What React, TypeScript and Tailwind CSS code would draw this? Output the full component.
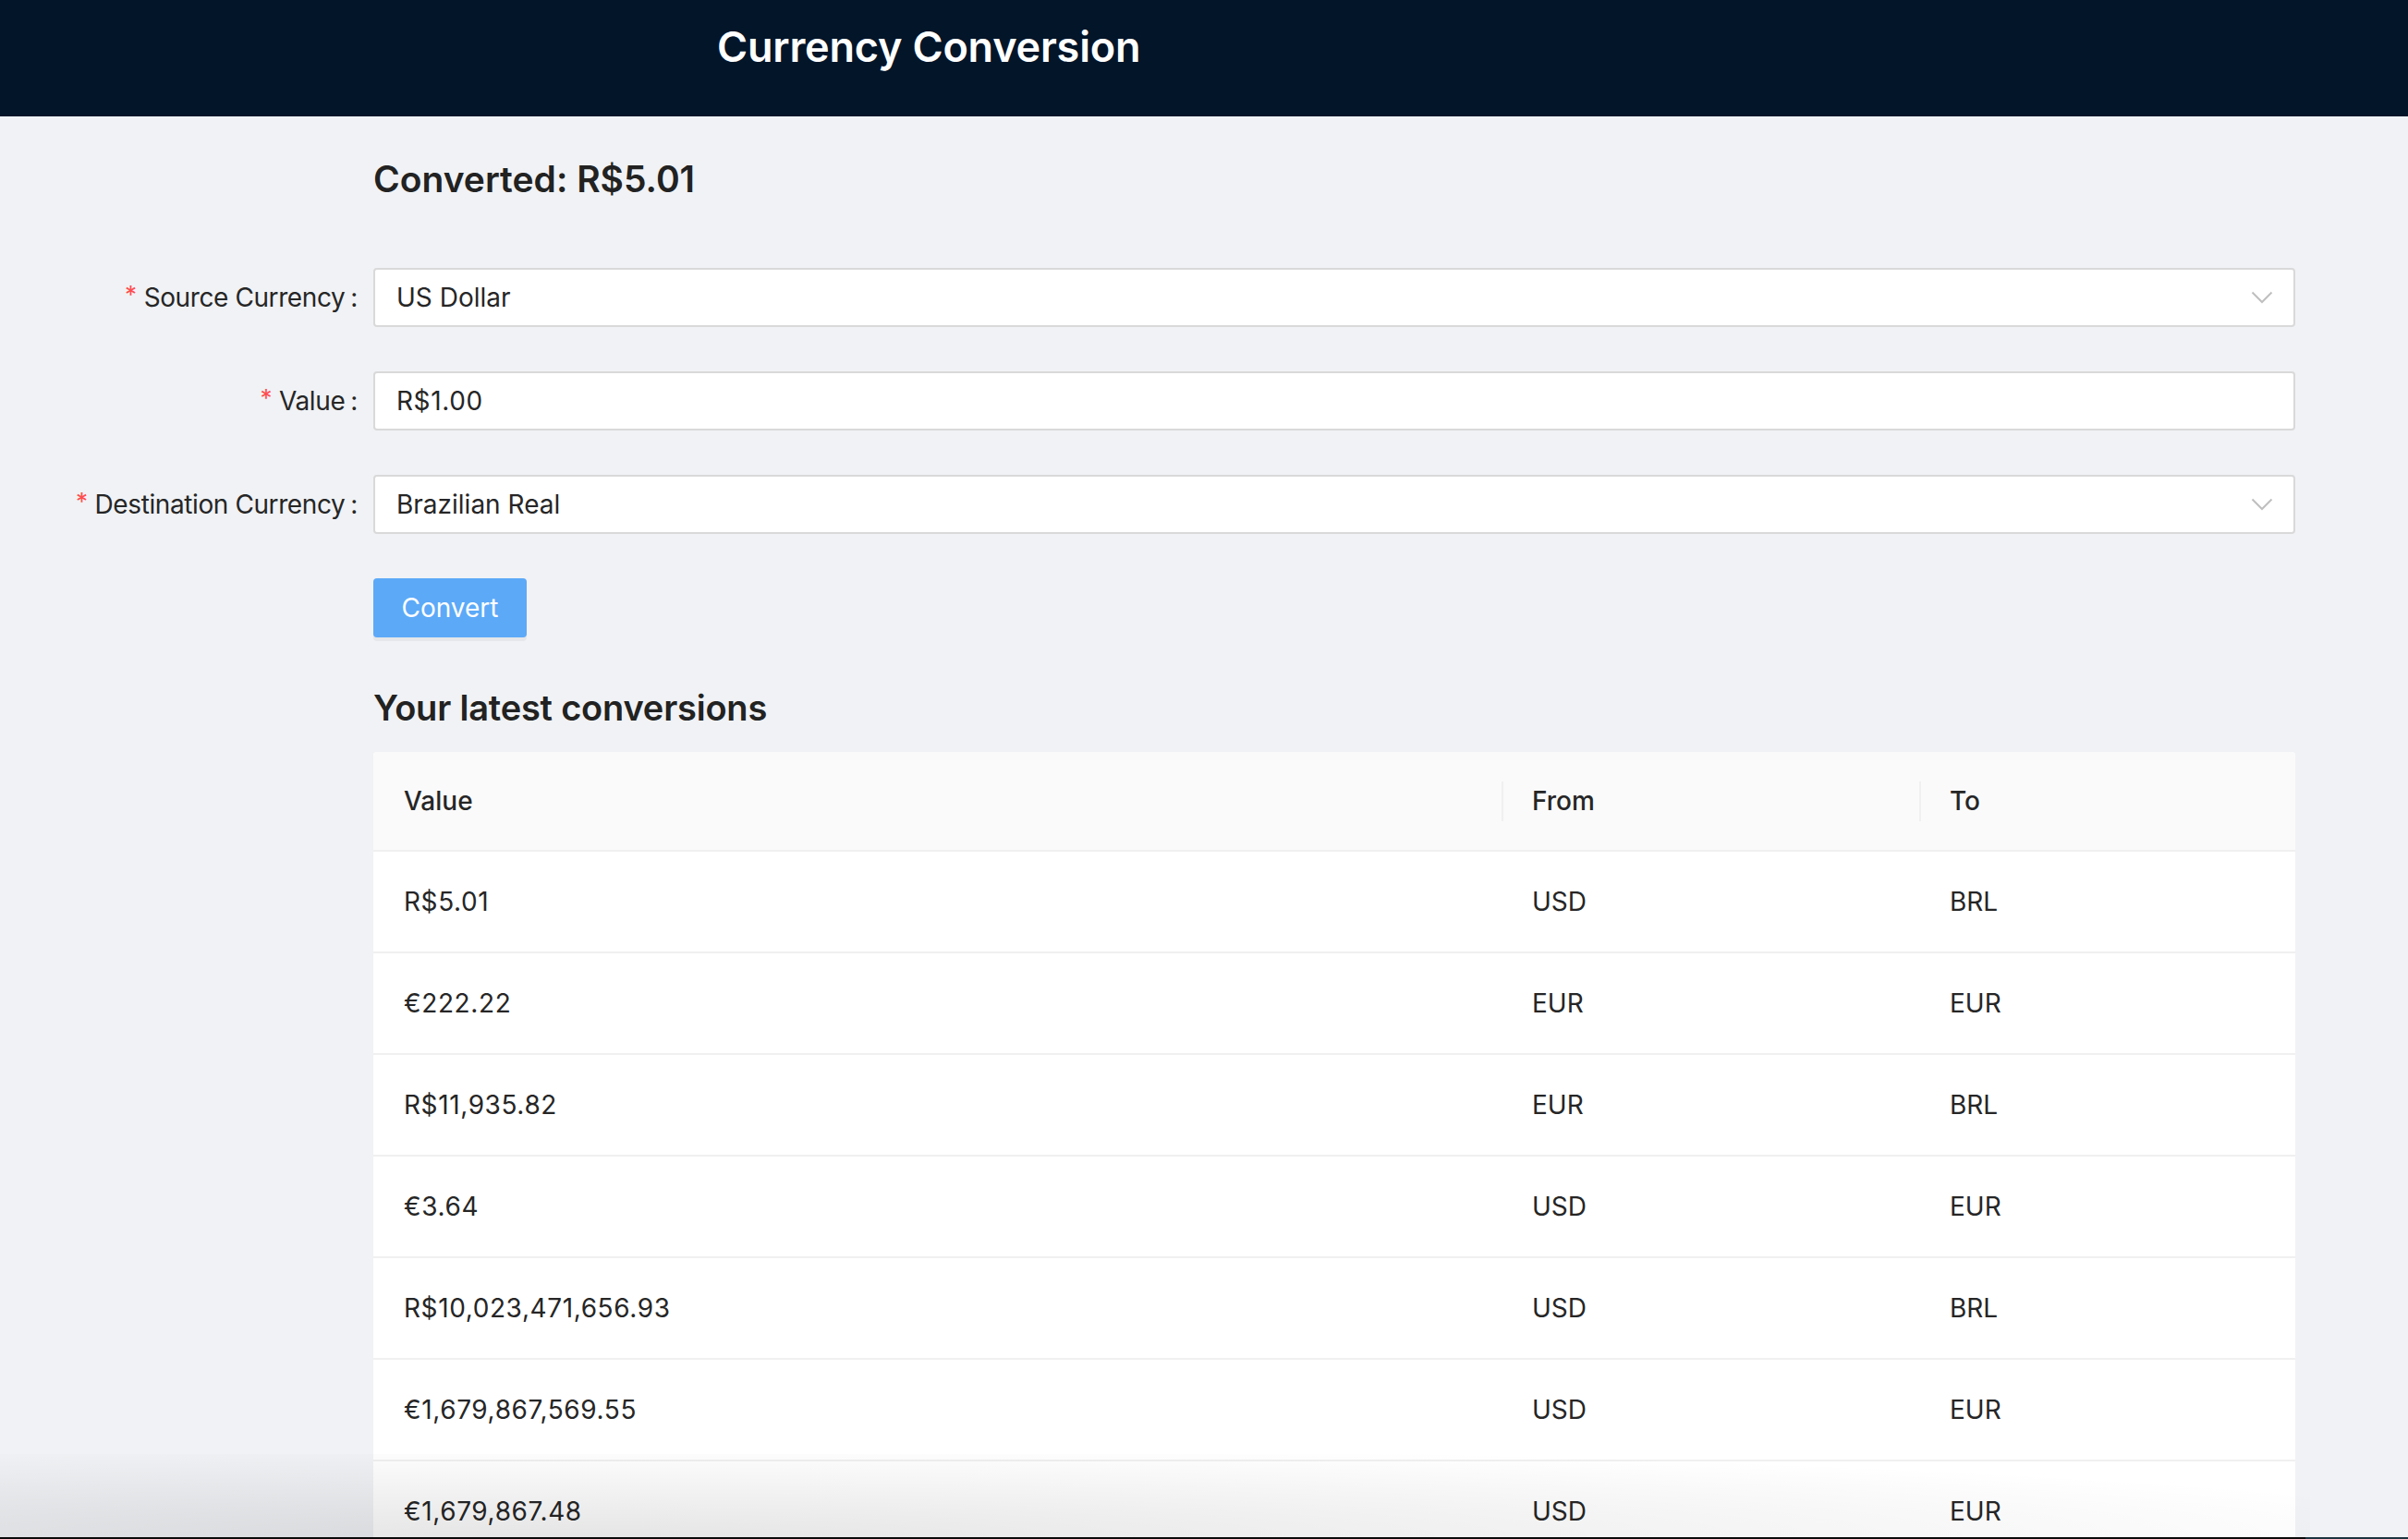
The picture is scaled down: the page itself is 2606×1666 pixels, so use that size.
import React from "react";

const rows = [
  { v: "R$5.01", f: "USD", t: "BRL" },
  { v: "€222.22", f: "EUR", t: "EUR" },
  { v: "R$11,935.82", f: "EUR", t: "BRL" },
  { v: "€3.64", f: "USD", t: "EUR" },
  { v: "R$10,023,471,656.93", f: "USD", t: "BRL" },
  { v: "€1,679,867,569.55", f: "USD", t: "EUR" },
  { v: "€1,679,867.48", f: "USD", t: "EUR" },
  { v: "€1,679.86", f: "USD", t: "EUR" },
];

function Chevron() {
  return (
    <svg width="24" height="14" viewBox="0 0 24 14" fill="none">
      <polyline points="1.5,1.5 12,12 22.5,1.5" stroke="#bfbfbf" strokeWidth="2" fill="none" />
    </svg>
  );
}

function Label({ text }: { text: string }) {
  return (
    <div className="w-[404px] pr-[17px] flex justify-end items-center h-[64px] text-[28px] leading-[44px] text-[#262626] tracking-[-0.4px]">
      <span className="text-[#ff4d4f] text-[26px] mr-[8px] leading-none relative top-[-3px]">*</span>
      <span>{text}</span>
      <span className="ml-[6px]">:</span>
    </div>
  );
}

function Field({ label, value, select, numeric }: { label: string; value: string; select?: boolean; numeric?: boolean }) {
  return (
    <div className="flex items-center">
      <Label text={label} />
      <div className="w-[2080px] h-[64px] bg-white border-2 border-[#d9d9d9] rounded-[4px] flex items-center justify-between pl-[23px] pr-[22px] text-[28px] leading-[44px] text-[#262626]">
        <span className={numeric ? "tracking-[0.6px]" : ""}>{value}</span>
        {select ? <Chevron /> : null}
      </div>
    </div>
  );
}

export default function App() {
  return (
    <div
      className="relative w-[2606px] h-[1666px] overflow-hidden bg-[#f0f2f5]"
      style={{ fontFamily: "Inter, 'Noto Sans', sans-serif" }}
    >
      <header className="h-[126px] bg-[#031529]">
        <div className="h-[102px] flex items-center pl-[776px]">
          <h1 className="text-[45px] leading-[54px] font-semibold text-white tracking-[-0.2px]">Currency Conversion</h1>
        </div>
      </header>

      <main className="flex flex-col">
        <h2 className="mt-[45px] pl-[404px] text-[39px] leading-[46px] font-semibold text-[#222]">Converted: R$5.01</h2>

        <div className="mt-[73px] flex flex-col gap-[48px]">
          <Field label="Source Currency" value="US Dollar" select />
          <Field label="Value" value="R$1.00" numeric />
          <Field label="Destination Currency" value="Brazilian Real" select />
          <div className="pl-[404px]">
            <button className="w-[166px] h-[64px] rounded-[4px] bg-[#5ca9f8] text-white text-[28px] leading-[44px] shadow-[0_4px_0_rgba(0,0,0,0.045)]">
              Convert
            </button>
          </div>
        </div>

        <h2 className="mt-[53px] pl-[404px] text-[38px] leading-[46px] font-semibold text-[#222] tracking-[-0.2px]">Your latest conversions</h2>

        <div className="mt-[25px] ml-[404px] w-[2080px] bg-white rounded-t-[4px] text-[28px] leading-[44px] text-[#262626]">
          <div className="grid grid-cols-[1221px_452px_407px] h-[108px] bg-[#fafafa] border-b-2 border-[#f0f0f0] rounded-t-[4px] font-medium">
            <div className="flex items-center pl-[33px]">Value</div>
            <div className="relative flex items-center pl-[33px]">
              <span className="absolute left-0 top-[32px] h-[43px] w-[2px] bg-[#f0f0f0]" />
              From
            </div>
            <div className="relative flex items-center pl-[33px]">
              <span className="absolute left-0 top-[32px] h-[43px] w-[2px] bg-[#f0f0f0]" />
              To
            </div>
          </div>
          {rows.map((r, i) => (
            <div key={i} className="grid grid-cols-[1221px_452px_407px] h-[110px] border-b-2 border-[#f0f0f0]">
              <div className="flex items-center pl-[33px] tracking-[0.6px]">{r.v}</div>
              <div className="flex items-center pl-[33px]">{r.f}</div>
              <div className="flex items-center pl-[33px]">{r.t}</div>
            </div>
          ))}
        </div>
      </main>

      <div className="absolute left-0 bottom-[2px] w-[2500px] h-[90px] pointer-events-none bg-[radial-gradient(ellipse_at_25%_100%,rgba(0,0,0,0.10),rgba(0,0,0,0.03)_55%,transparent_80%)]" />
      <div className="absolute left-0 bottom-0 w-full h-[2px] bg-[#0a0a0a] flex justify-end">
        <div className="w-[111px] h-full bg-[#1c3440]" />
      </div>
    </div>
  );
}
